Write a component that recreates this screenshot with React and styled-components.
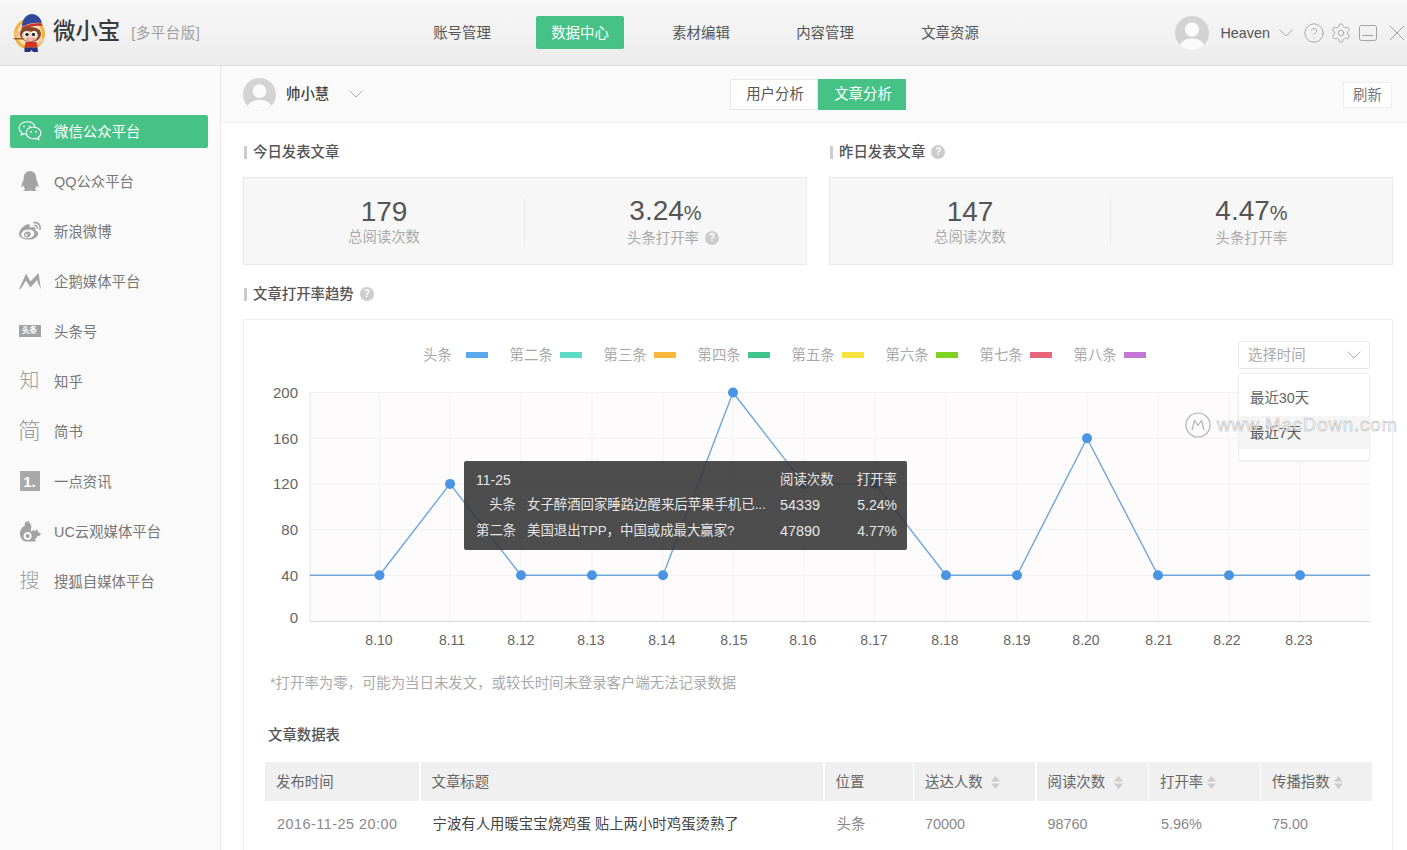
import React from "react";
import styled, { createGlobalStyle } from "styled-components";
import { RiQqFill, RiWeiboFill } from "react-icons/ri";
import { Settings, CircleHelp } from "lucide-react";

const Global = createGlobalStyle`
  html, body { margin: 0; padding: 0; background: #fff; }
  body { font-family: "Liberation Sans", "Noto Sans CJK SC", sans-serif; font-size: 14.4px; line-height: 20px; color: #555; }
  * { box-sizing: border-box; }
`;

const Page = styled.div`
  width: 1407px; height: 850px; overflow: hidden; display: flex; flex-direction: column; position: relative;
`;
const Header = styled.header`
  height: 66px; flex: none; display: flex; align-items: center;
  background: linear-gradient(180deg, #f8f8f8 0%, #ebebeb 100%);
  border-bottom: 1px solid #dcdcdc;
`;
const Brand = styled.div`
  width: 418px; flex: none; display: flex; align-items: center; padding-left: 12px;
`;
const BrandName = styled.span`
  font-size: 22.4px; font-weight: 500; color: #3a3a3a; margin-left: 5px; line-height: 1;
`;
const BrandTag = styled.span`
  font-size: 14.4px; color: #a0a0a0; margin-left: 11px; letter-spacing: .6px;
`;
const Nav = styled.nav`display: flex; align-items: center;`;
const NavItem = styled.a`
  width: 88px; height: 33px; display: flex; align-items: center; justify-content: center; border-radius: 2px;
  margin-left: ${p => p.$gap}px;
  background: ${p => (p.$active ? "#47c287" : "transparent")};
  color: ${p => (p.$active ? "#fff" : "#555")};
`;
const UserBar = styled.div`
  margin-left: auto; display: flex; align-items: center; color: #9a9a9a; padding-right: 2px;
`;
const UserName = styled.span`color: #555; font-size: 14.4px; margin: 0 9px 0 11px;`;
const Ghost = styled.span`display: flex; margin-left: ${p => p.$ml || 0}px; color: #a2a2a2;`;

const Body = styled.div`flex: 1; display: flex; min-height: 0;`;
const Sidebar = styled.aside`
  width: 221px; flex: none; background: #fafafa; border-right: 1px solid #e9e9e9;
  padding: 49px 12px 0 10px; display: flex; flex-direction: column; gap: 17px;
`;
const SideItem = styled.div`
  height: 33px; display: flex; align-items: center; border-radius: 2px; color: ${p => (p.$active ? "#fff" : "#777")};
  background: ${p => (p.$active ? "#47c287" : "transparent")};
`;
const SideIcon = styled.span`
  width: 44px; flex: none; display: flex; justify-content: center; align-items: center; margin-top: -1px;
  color: ${p => (p.$active ? "#fff" : "#a3a3a3")}; padding-right: 5px;
`;
const GlyphIcon = styled.span`font-size: ${p => p.$size}px; color: #9a9a9a; font-weight: 300; line-height: 1;`;
const BadgeWide = styled.span`
  width: 22px; height: 12px; background: #a3a3a3; color: #fff; font-size: 7.5px; font-weight: 700;
  display: flex; align-items: center; justify-content: center; line-height: 1;
`;
const BadgeOne = styled.span`
  width: 20px; height: 20px; background: #a8a8a8; color: #fff; font-size: 15px; font-weight: 700;
  display: flex; align-items: center; justify-content: center; line-height: 1;
`;

const Main = styled.main`flex: 1; min-width: 0; display: flex; flex-direction: column; background: #fff;`;
const SubBar = styled.div`
  height: 57px; flex: none; background: #fafafa; border-bottom: 1px solid #eee; position: relative;
  display: grid; grid-template-columns: 1fr 176px 1fr; align-items: center; padding: 0 15px 0 22px;
`;
const Account = styled.div`display: flex; align-items: center;`;
const AccountName = styled.span`color: #444; font-weight: 500; margin: 0 20px 0 10px;`;
const Tabs = styled.div`display: flex; height: 31px;`;
const Tab = styled.div`
  width: 88px; display: flex; align-items: center; justify-content: center; padding-left: 3px;
  background: ${p => (p.$active ? "#47c287" : "#fff")};
  color: ${p => (p.$active ? "#fff" : "#555")};
  border: 1px solid ${p => (p.$active ? "#47c287" : "#e8e8e8")};
`;
const Refresh = styled.button`
  justify-self: end; width: 49px; height: 26px; margin-top: 2px; background: #fff; border: 1px solid #eee; color: #777;
  font: inherit; padding: 0;
`;
const Content = styled.div`padding: 19px 14px 0 22px; flex: 1; min-height: 0;`;
const StatsRow = styled.div`display: grid; grid-template-columns: 564px 564px; column-gap: 22px;`;
const Heading = styled.h3`
  margin: 0; height: 20px; display: flex; align-items: center; font-size: 14.4px; font-weight: 500; color: #555;
  &::before { content: ""; width: 3px; height: 13px; background: #ccc; margin: 0 6px 0 1px; }
`;
const Help = styled.span`
  width: 14px; height: 14px; border-radius: 50%; background: #ccc; color: #fff; font-size: 10px; font-weight: 700;
  display: inline-flex; align-items: center; justify-content: center; margin-left: 6px;
`;
const StatCard = styled.div`
  margin-top: 15px; height: 88px; background: #f7f7f7; border: 1px solid #e9e9e9;
  display: grid; grid-template-columns: 280px 1fr; align-items: center;
`;
const Stat = styled.div`
  display: flex; flex-direction: column; align-items: center; height: 46px; justify-content: center;
  & + & { border-left: 1px solid #e9e9e9; }
`;
const StatValue = styled.div`font-size: 28px; line-height: 30px; color: #555; margin-top: 2px;`;
const Pct = styled.span`font-size: 20px;`;
const StatLabel = styled.div`color: #aaa; display: flex; align-items: center; padding-left: ${p => p.$pl || 0}px;`;
const TrendHeading = styled(Heading)`margin-top: 19px;`;

const ChartCard = styled.section`
  margin-top: 15px; height: 560px; border: 1px solid #eee; position: relative;
`;
const Toolbar = styled.div`
  margin-top: 21px; height: 28px; padding: 0 22px 0 179px; display: flex; align-items: center; justify-content: space-between;
`;
const Legend = styled.div`display: flex; gap: 21.8px; color: #aaa;`;
const LegendItem = styled.div`display: flex; align-items: center; gap: ${p => p.$gap}px;`;
const Swatch = styled.i`width: 22px; height: 6px; background: ${p => p.$c}; display: block;`;
const SelectBox = styled.div`
  width: 132px; height: 28px; border: 1px solid #e8e8e8; color: #aaa; border-radius: 2px; background: #fff;
  display: flex; align-items: center; justify-content: space-between; padding: 0 8px 0 9px;
`;
const Chart = styled.svg`display: block; margin: 11px 0 0 18px;`;
const Note = styled.p`margin: 18px 0 0 26px; color: #aaa;`;
const TableTitle = styled.h4`margin: 32px 0 0 24px; font-size: 14.4px; font-weight: 500; color: #555;`;
const Table = styled.div`
  margin: 17px 0 0 21px; width: 1106px; display: grid; column-gap: 1.5px;
  grid-template-columns: 154px 402.5px 88px 121px 111px 110.5px 110.5px;
`;
const Th = styled.div`
  height: 39px; background: #f0f0f0; display: flex; align-items: center; color: #666; padding-left: 11px; gap: ${p => p.$gap || 0}px;
`;
const Td = styled.div`
  height: 46px; display: flex; align-items: center; padding-left: ${p => p.$pl || 12}px; color: ${p => p.$dark ? "#444" : "#888"};
  letter-spacing: ${p => p.$ls || 0}px;
`;
const SortMark = styled.svg`display: block; margin-top: 1px;`;

const Menu = styled.div`
  position: absolute; left: 994px; top: 53px; width: 132px; height: 88px; background: #fff;
  border: 1px solid #eee; border-radius: 2px; box-shadow: 0 1px 2px rgba(0,0,0,.05); padding-top: 7px; color: #666;
`;
const MenuItem = styled.div`
  height: 33px; display: flex; align-items: center; padding-left: 11px; background: ${p => p.$hover ? "#f5f5f5" : "transparent"};
  margin-top: ${p => p.$hover ? 2 : 0}px; color: ${p => p.$hover ? "#555" : "#666"};
`;
const Tooltip = styled.div`
  position: absolute; left: 220px; top: 141px; width: 443px; height: 89px; border-radius: 2px;
  background: rgba(52,52,52,.88); color: #e6e6e6; font-size: 14px; padding: 6px 10px 0 12px;
  display: grid; grid-template-columns: 40px 264px 76px 1fr; grid-auto-rows: 25.5px; align-items: center;
`;
const TipName = styled.div`text-align: right; white-space: nowrap; font-size: 13.4px;`;
const TipTitle = styled.div`padding-left: 11px; white-space: nowrap; font-size: 13.4px;`;
const TipHead = styled.div`white-space: nowrap; font-size: 13.4px; text-align: ${p => p.$end ? "right" : "left"};`;
const TipNum = styled.div`white-space: nowrap; font-size: 14.4px;`;
const TipRate = styled.div`text-align: right; white-space: nowrap;`;
const Watermark = styled.div`
  position: absolute; left: 1185px; top: 412px; display: flex; align-items: center; gap: 6px; pointer-events: none;
  color: rgba(255,255,255,.75); -webkit-text-stroke: .5px #b0b0b0; font-size: 18.6px; letter-spacing: .9px; white-space: nowrap; line-height: 26px;
`;

const Chevron = ({ w = 14, c = "#a8a8a8" }) => (
  <svg width={w} height={w * 0.55} viewBox="0 0 14 7.7" fill="none" stroke={c} strokeWidth="1">
    <path d="M.5.7 7 7 13.5.7" />
  </svg>
);
const Avatar = ({ size = 34 }) => (
  <svg width={size} height={size} viewBox="0 0 34 34">
    <defs><clipPath id={`av${size}`}><circle cx="17" cy="17" r="17" /></clipPath></defs>
    <circle cx="17" cy="17" r="17" fill="#d3d3d3" />
    <g clipPath={`url(#av${size})`} fill="#fbfbfb">
      <circle cx="17" cy="13.5" r="7" />
      <ellipse cx="17" cy="30" rx="12" ry="7.5" />
    </g>
  </svg>
);
const Mascot = () => (
  <svg width="36" height="38" viewBox="0 0 36 38">
    <circle cx="17.500" cy="20" r="15.500" fill="#f3b23a" />
    <circle cx="17.500" cy="20" r="12.500" fill="#f7e3b8" />
    <path d="M10 13C10 5 14 .5 20 0c5 .5 8.500 3.500 10 9-6-1-14 0-20 4z" fill="#2f4a9c" />
    <path d="M9 14c6-4 14-5.500 21-4.500l.5 2.500c-7-.8-14 .5-20 4z" fill="#cc2f2a" />
    <path d="M8 20c0-5 4-7 10-7s11 2 11 7-5 8-10.500 8S8 25 8 20z" fill="#8a4a2a" />
    <ellipse cx="5.500" cy="20" rx="2.500" ry="3" fill="#f0bf94" />
    <path d="M10 21c0-3 3-4 5-3 2-1 3-1 5 0 2-1 6 0 6 3 0 4-4 6.500-8 6.500S10 25 10 21z" fill="#f6cdb0" />
    <circle cx="14.500" cy="20" r="2.900" fill="#fff" /><circle cx="22" cy="20" r="2.900" fill="#fff" />
    <circle cx="15" cy="20.500" r="1.700" fill="#222" /><circle cx="21.500" cy="20.500" r="1.700" fill="#222" />
    <path d="M15 24.500c2 1 5 1 7 0l-1.500 2.500h-4z" fill="#fff" stroke="#a33" strokeWidth=".5" />
    <path d="M13.500 28h11l1 5.500h-13z" fill="#d8371f" />
    <path d="M25 29l5-5 2 1.500-6 6z" fill="#f6cdb0" />
    <path d="M12.500 33.500h13l.5 4.500h-5l-1.500-2-1.500 2h-5.500z" fill="#27357f" />
    <path d="M1 24h10l-1 1.600H3z" fill="#8a5a22" />
  </svg>
);
const MinBox = () => (
  <svg width="18" height="16" viewBox="0 0 18 16" fill="none" stroke="currentColor">
    <rect x=".5" y=".5" width="17" height="15" rx="2" /><path d="M3.500 10.500h11" />
  </svg>
);
const CloseMark = () => (
  <svg width="16" height="16" viewBox="0 0 16 16" fill="none" stroke="currentColor">
    <path d="M1 1l14 14M15 1 1 15" />
  </svg>
);
const WechatOutline = () => (
  <svg width="24" height="20" viewBox="0 0 24 20" fill="none" stroke="#fff" strokeWidth="1.100">
    <path d="M9 .8C4.500.8 1 3.500 1 7c0 2 1.100 3.600 2.800 4.700L3.200 14l2.700-1.300c.9.200 1.700.3 2.600.3" />
    <path d="M8.300 13C7.800 9.500 10.500 6 15 6c4.300 0 8 2.600 8 6 0 2-1.200 3.500-2.700 4.500l.5 2.200-2.500-1.300c-1 .3-1.800.4-2.800.4-3.500 0-6.200-2-7.200-4.800z" />
    <path d="M17 6.300C16.500 3 13.500.8 9 .8" />
    <circle cx="6" cy="5.300" r=".9" fill="#fff" stroke="none" /><circle cx="11.500" cy="5.300" r=".9" fill="#fff" stroke="none" />
    <circle cx="13" cy="10.800" r=".9" fill="#fff" stroke="none" /><circle cx="18" cy="10.800" r=".9" fill="#fff" stroke="none" />
  </svg>
);
const Penguin = () => (
  <svg width="22" height="17" viewBox="0 0 22 17" fill="#a3a3a3">
    <path d="M0 16.500 7 .5l4.500 8L19.500 0 22 16.500l-4-9.500-6.500 7.500L7 7.500 2 15.500z" />
  </svg>
);
const Squirrel = () => (
  <svg width="22" height="21" viewBox="0 0 22 21" fill="#a3a3a3">
    <path d="M10 0c-3 .5-5 2-4 4.500-2 1-4.500 3.500-5 7-.5 4.500 2 8.500 6 9h9l1-1.500-2-.8c2-.2 3-1.500 3-3 2 0 3.500-.8 4-2.500l-3-2-.5-2.500-2 1.500c-1.500-1-3.500-.5-4.500 1-.5-2 .5-4 .3-6C11.500 2.500 9.500 2 10 0z" />
    <path d="M8.700 11c-2.500 0-4.200 1.900-4.200 4.200s1.800 3.800 4.200 3.800 4-1.700 4-3.800-1.600-4.200-4-4.200zm0 2c1.200 0 2 1 2 2.100s-.9 1.900-2 1.900-2.200-.8-2.200-1.900.9-2.100 2.200-2.100z" fill="#fafafa" />
  </svg>
);
const Sort = () => (
  <SortMark width="9" height="13" viewBox="0 0 9 13" fill="#ccc"><path d="M4.500 0 9 5.500H0zM0 7.500h9L4.500 13z" /></SortMark>
);

const menu = [
  { t: "微信公众平台", i: <WechatOutline />, active: true },
  { t: "QQ公众平台", i: <RiQqFill size={24} /> },
  { t: "新浪微博", i: <RiWeiboFill size={24} /> },
  { t: "企鹅媒体平台", i: <Penguin /> },
  { t: "头条号", i: <BadgeWide>头条</BadgeWide> },
  { t: "知乎", i: <GlyphIcon $size={20}>知</GlyphIcon> },
  { t: "简书", i: <GlyphIcon $size={23}>简</GlyphIcon> },
  { t: "一点资讯", i: <BadgeOne>1.</BadgeOne> },
  { t: "UC云观媒体平台", i: <Squirrel /> },
  { t: "搜狐自媒体平台", i: <GlyphIcon $size={20}>搜</GlyphIcon> },
];
const nav = [["账号管理", 0], ["数据中心", 30, true], ["素材编辑", 33], ["内容管理", 36], ["文章资源", 37]];
const legend = [["头条", "#5aa9ee", 14], ["第二条", "#5ddcc4", 7], ["第三条", "#f8b73b", 7], ["第四条", "#3fc48b", 7], ["第五条", "#f6e33f", 7], ["第六条", "#7ed321", 7], ["第七条", "#e8647a", 7], ["第八条", "#c276d6", 7]];

const xs = [379.5, 450, 521, 592, 663, 733, 804, 875, 946, 1017, 1087, 1158, 1229, 1300];
const labelXs = [379, 452, 521, 591, 662, 734, 803, 874, 945, 1017, 1086, 1159, 1227, 1299];
const vals = [40, 120, 40, 40, 40, 200, 120, 120, 40, 40, 160, 40, 40, 40];
const yOf = v => 621 - v * 1.1425;
const ticks = [0, 40, 80, 120, 160, 200];
const linePts = [[310, yOf(40)], ...xs.map((x, i) => [x, yOf(vals[i])]), [1370, yOf(40)]].map(p => p.join(",")).join(" ");

const columns = [
  ["发布时间"], ["文章标题"], ["位置"], ["送达人数", 8], ["阅读次数", 9], ["打开率", 4], ["传播指数", 4],
];

export default function App() {
  return (
    <Page>
      <Global />
      <Header>
        <Brand>
          <Mascot />
          <BrandName>微小宝</BrandName>
          <BrandTag>[多平台版]</BrandTag>
        </Brand>
        <Nav>
          {nav.map(([t, g, a]) => <NavItem key={t} $gap={g} $active={a}>{t}</NavItem>)}
        </Nav>
        <UserBar>
          <Avatar />
          <UserName>Heaven</UserName>
          <Chevron />
          <Ghost $ml={10}><CircleHelp size={22} strokeWidth={1} /></Ghost>
          <Ghost $ml={5}><Settings size={22} strokeWidth={1} /></Ghost>
          <Ghost $ml={7}><MinBox /></Ghost>
          <Ghost $ml={12}><CloseMark /></Ghost>
        </UserBar>
      </Header>
      <Body>
        <Sidebar>
          {menu.map(m => (
            <SideItem key={m.t} $active={m.active}>
              <SideIcon $active={m.active}>{m.i}</SideIcon>
              {m.t}
            </SideItem>
          ))}
        </Sidebar>
        <Main>
          <SubBar>
            <Account>
              <Avatar size={33} />
              <AccountName>帅小慧</AccountName>
              <Chevron />
            </Account>
            <Tabs>
              <Tab>用户分析</Tab>
              <Tab $active>文章分析</Tab>
            </Tabs>
            <Refresh>刷新</Refresh>
          </SubBar>
          <Content>
            <StatsRow>
              <div>
                <Heading>今日发表文章</Heading>
                <StatCard>
                  <Stat><StatValue>179</StatValue><StatLabel>总阅读次数</StatLabel></Stat>
                  <Stat><StatValue>3.24<Pct>%</Pct></StatValue><StatLabel $pl={15}>头条打开率<Help>?</Help></StatLabel></Stat>
                </StatCard>
              </div>
              <div>
                <Heading>昨日发表文章<Help>?</Help></Heading>
                <StatCard>
                  <Stat><StatValue>147</StatValue><StatLabel>总阅读次数</StatLabel></Stat>
                  <Stat><StatValue>4.47<Pct>%</Pct></StatValue><StatLabel>头条打开率</StatLabel></Stat>
                </StatCard>
              </div>
            </StatsRow>
            <TrendHeading>文章打开率趋势<Help>?</Help></TrendHeading>
            <ChartCard>
              <Toolbar>
                <Legend>
                  {legend.map(([t, c, g]) => (
                    <LegendItem key={t} $gap={g}>{t}<Swatch $c={c} /></LegendItem>
                  ))}
                </Legend>
                <SelectBox>选择时间<Chevron /></SelectBox>
              </Toolbar>
              <Chart width="1110" height="275" viewBox="262 380 1110 275">
                <rect x="310" y="392" width="1060" height="229" fill="#fdfbfc" />
                {ticks.slice(1).map(t => <line key={t} x1="310" x2="1370" y1={yOf(t)} y2={yOf(t)} stroke="#f0f0f0" />)}
                {xs.map(x => <line key={x} x1={x} x2={x} y1="392" y2="621" stroke="#f3f2f3" />)}
                <line x1="310" x2="310" y1="392" y2="621" stroke="#e6e6e6" />
                <line x1="310" x2="1370" y1="621.500" y2="621.500" stroke="#dcdcdc" />
                {ticks.map(t => (
                  <text key={t} x="298" y={t === 0 ? 623 : yOf(t) + 5.500} textAnchor="end" fontSize="15" fill="#666">{t}</text>
                ))}
                {labelXs.map((x, i) => (
                  <text key={x} x={x} y="645" textAnchor="middle" fontSize="14" fill="#666">8.{10 + i}</text>
                ))}
                <polyline points={linePts} fill="none" stroke="#6ea7da" strokeWidth="1.400" />
                {xs.map((x, i) => <circle key={x} cx={x} cy={yOf(vals[i])} r="5" fill="#4a94e4" />)}
              </Chart>
              <Note>*打开率为零，可能为当日未发文，或较长时间未登录客户端无法记录数据</Note>
              <TableTitle>文章数据表</TableTitle>
              <Table>
                {columns.map(([t, g]) => <Th key={t} $gap={g}>{t}{g && <Sort />}</Th>)}
                <Td $ls={0.5}>2016-11-25 20:00</Td>
                <Td $dark>宁波有人用暖宝宝烧鸡蛋 贴上两小时鸡蛋烫熟了</Td>
                <Td>头条</Td>
                <Td $pl={11}>70000</Td>
                <Td $pl={11}>98760</Td>
                <Td $pl={12}>5.96%</Td>
                <Td $pl={11}>75.00</Td>
              </Table>
              <Menu>
                <MenuItem>最近30天</MenuItem>
                <MenuItem $hover>最近7天</MenuItem>
              </Menu>
              <Tooltip>
                <div>11-25</div><div /><TipHead>阅读次数</TipHead><TipHead $end>打开率</TipHead>
                <TipName>头条</TipName><TipTitle>女子醉酒回家睡路边醒来后苹果手机已...</TipTitle><TipNum>54339</TipNum><TipRate>5.24%</TipRate>
                <TipName>第二条</TipName><TipTitle>美国退出TPP，中国或成最大赢家?</TipTitle><TipNum>47890</TipNum><TipRate>4.77%</TipRate>
              </Tooltip>
            </ChartCard>
          </Content>
        </Main>
      </Body>
      <Watermark>
        <svg width="26" height="26" viewBox="0 0 26 26" fill="none" stroke="#b5b5b5" strokeWidth="1.200">
          <circle cx="13" cy="13" r="12" />
          <path d="M7 18 9.500 8.500l3.500 5 3.500-5L19 18" />
        </svg>
        www.MacDown.com
      </Watermark>
    </Page>
  );
}
